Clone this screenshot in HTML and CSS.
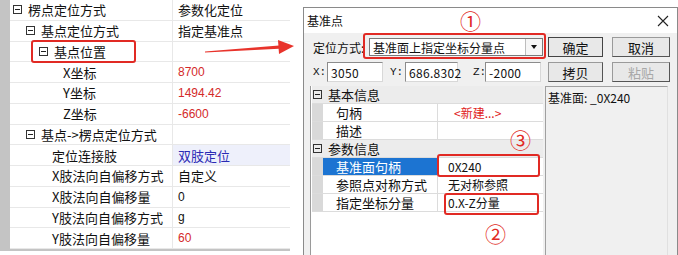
FILE: index.html
```html
<!DOCTYPE html>
<html lang="zh">
<head>
  <meta charset="UTF-8">
  <title>基准点</title>
  <link rel="stylesheet" href="styles.css">
</head>
<body>
  <div class="screen">

    <!-- property tree on the left -->
    <div class="tree">
      <div class="row"><div class="name lv1"><span class="tog"></span>楞点定位方式</div><div class="val">参数化定位</div></div>
      <div class="row"><div class="name lv2"><span class="tog"></span>基点定位方式</div><div class="val">指定基准点</div></div>
      <div class="row"><div class="name lv3"><span class="tog"></span>基点位置</div><div class="val"></div></div>
      <div class="row"><div class="name leaf3">X坐标</div><div class="val num red">8700</div></div>
      <div class="row"><div class="name leaf3">Y坐标</div><div class="val num red">1494.42</div></div>
      <div class="row"><div class="name leaf3">Z坐标</div><div class="val num red">-6600</div></div>
      <div class="row"><div class="name lv2"><span class="tog"></span>基点-&gt;楞点定位方式</div><div class="val"></div></div>
      <div class="row"><div class="name leaf2">定位连接肢</div><div class="val blue">双肢定位</div></div>
      <div class="row"><div class="name leaf2">X肢法向自偏移方式</div><div class="val">自定义</div></div>
      <div class="row"><div class="name leaf2">X肢法向自偏移量</div><div class="val num">0</div></div>
      <div class="row"><div class="name leaf2">Y肢法向自偏移方式</div><div class="val num">g</div></div>
      <div class="row"><div class="name leaf2">Y肢法向自偏移量</div><div class="val num red">60</div></div>
    </div>

    <!-- dialog -->
    <div class="dlg">
      <div class="dlg-title">
        <span>基准点</span>
        <svg class="close" width="12" height="12" viewBox="0 0 12 12">
          <path d="M1 1 L11 11 M11 1 L1 11" stroke="#222" stroke-width="1.1" fill="none"/>
        </svg>
      </div>
      <div class="dlg-body">
        <div class="line1">
          <span class="lbl">定位方式:</span>
          <div class="combo">
            <span>基准面上指定坐标分量点</span>
            <span class="drop"><i></i></span>
          </div>
          <button class="btn def">确定</button>
          <button class="btn">取消</button>
        </div>
        <div class="line2">
          <span class="xyz">X:</span><div class="edit w-x">3050</div>
          <span class="xyz l-y">Y:</span><div class="edit w-y">686.8302</div>
          <span class="xyz l-z">Z:</span><div class="edit w-z">-2000</div>
          <button class="btn">拷贝</button>
          <button class="btn off">粘贴</button>
        </div>
        <div class="main">
          <div class="pgrid">
            <div class="prow head"><span class="tog"></span>基本信息</div>
            <div class="prow"><div class="gut"></div><div class="pn">句柄</div><div class="pv red">&lt;新建...&gt;</div></div>
            <div class="prow"><div class="gut"></div><div class="pn">描述</div><div class="pv"></div></div>
            <div class="prow head"><span class="tog"></span>参数信息</div>
            <div class="prow"><div class="gut"></div><div class="pn sel">基准面句柄</div><div class="pv">0X240</div></div>
            <div class="prow"><div class="gut"></div><div class="pn">参照点对称方式</div><div class="pv">无对称参照</div></div>
            <div class="prow"><div class="gut"></div><div class="pn">指定坐标分量</div><div class="pv">0.X-Z分量</div></div>
          </div>
          <div class="info">基准面: _0X240</div>
        </div>
      </div>
    </div>

    <!-- red annotations drawn over the screenshot -->
    <div class="mark box-a"></div>
    <div class="mark box-1"></div>
    <div class="mark box-3"></div>
    <div class="mark box-2"></div>
    <span class="circ c1">①</span>
    <span class="circ c3">③</span>
    <span class="circ c2">②</span>
    <svg class="arrow" width="678" height="255" viewBox="0 0 678 255">
      <polygon points="205,51.5 279,45.5 279,48.8 205,52.6" fill="#e8332b"/>
      <polygon points="278,40 294,46 279,54" fill="#e8332b"/>
    </svg>
  </div>
</body>
</html>
```

FILE: styles.css
```css
* { box-sizing: border-box; }
body { margin: 0; background: #fff; font-family: "Noto Sans CJK SC", "Liberation Sans", sans-serif; color: #111; }

.screen { position: relative; width: 678px; height: 255px; overflow: hidden; display: flex; align-items: flex-start; }

/* left tree */
.tree { width: 290px; border-left: 10px solid #c4c4c4; border-bottom: 2px solid #c4c4c4; font-size: 13px; }
.tree .row { display: flex; height: 20.75px; border-bottom: 1px solid #e8e8e8; }
.tree .name { width: 162px; display: flex; align-items: center; white-space: nowrap; line-height: 1; }
.tree .val { flex: 1; display: flex; align-items: center; padding-left: 5px; border-left: 1px solid #e8e8e8; white-space: nowrap; line-height: 1; }
.lv1 { padding-left: 3px; }
.lv2 { padding-left: 16px; }
.lv3 { padding-left: 29px; }
.leaf2 { padding-left: 42px; }
.leaf3 { padding-left: 53px; }
.num { font-family: "Liberation Sans", sans-serif; font-size: 12px; }
.red { color: #d42a2a; }
.blue { color: #2a2ab4; background: #eef0fb; }

.tog { display: inline-block; position: relative; width: 9px; height: 9px; border: 1px solid #333; margin-right: 6px; flex: none; }
.tog::after { content: ""; position: absolute; left: 1px; right: 1px; top: 3px; height: 1px; background: #222; }

/* dialog */
.dlg { margin-left: 13px; margin-top: 7px; width: 375px; height: 260px; border: 1px solid #8a8a8a; font-size: 12px; background: #f0f0f0; }
.dlg-title { height: 25px; background: #fff; display: flex; align-items: center; justify-content: space-between; padding: 0 8px 0 3px; }
.dlg-title span { font-size: 12px; }
.close { display: block; margin-top: 1px; }

.dlg-body { padding: 4px 0 0 9px; }
.line1, .line2 { display: flex; align-items: center; height: 20px; }
.line2 { margin-top: 5px; }
.lbl { width: 56px; font-size: 12px; }
.combo { width: 174px; height: 18px; background: #fff; border: 1px solid #7a7a7a; display: flex; align-items: center; justify-content: space-between; padding-left: 3px; font-size: 12px; }
.drop { width: 17px; height: 16px; border-left: 1px solid #bdbdbd; display: flex; align-items: center; justify-content: center; background: #f6f6f6; }
.drop i { width: 0; height: 0; border-left: 3.5px solid transparent; border-right: 3.5px solid transparent; border-top: 4px solid #111; }

.btn { height: 20px; width: 55px; margin-left: 5px; padding: 0; font: 13px "Noto Sans CJK SC", sans-serif; color: #111; background: #e8e8e8; border: 1px solid #9a9a9a; border-right-color: #555; border-bottom-color: #555; }
.btn + .btn { margin-left: 9px; width: 58px; }
.btn.def { border-color: #444; }
.btn.off { color: #a8a8a8; }

.xyz { width: 14px; font-family: "Liberation Mono", monospace; font-size: 11px; }
.l-y { margin-left: 7px; width: 15px; }
.l-z { margin-left: 15px; width: 12px; }
.edit { height: 20px; background: #fff; border: 1px solid #8c8c8c; border-right-color: #d8d8d8; border-bottom-color: #d8d8d8; padding-left: 3px; display: flex; align-items: center; font-size: 12px; letter-spacing: 0.3px; }
.w-x { width: 56px; }
.w-y { width: 53px; }
.w-z { width: 56px; }
.line2 .btn { margin-left: 7px; }
.line2 .btn + .btn { margin-left: 9px; }

.main { display: flex; margin-top: 4px; margin-left: -3px; }
.pgrid { width: 233px; height: 170px; background: #fff; border-left: 1px solid #9a9a9a; padding-left: 1px; }
.prow { display: flex; height: 18px; border-bottom: 1px solid #dcdcdc; align-items: stretch; }
.prow.head { background: #ececec; align-items: center; padding-left: 1px; font-size: 13px; }
.gut { width: 11px; background: #d9d9d9; }
.pn { width: 114px; padding-left: 13px; display: flex; align-items: center; font-size: 13px; white-space: nowrap; }
.pn.sel { background: #1c74d2; color: #fff; }
.pv { flex: 1; padding-left: 10px; display: flex; align-items: center; border-left: 1px solid #dcdcdc; font-size: 12px; white-space: nowrap; }
.pv.red { color: #e02020; padding-left: 16px; }

.info { width: 123px; height: 170px; margin-left: 2px; border: 1px solid #a0a0a0; border-right-color: #e0e0e0; border-bottom: none; padding: 2px 0 0 2px; font-size: 12px; background: #f0f0f0; }

/* annotations */
.mark { position: absolute; border: 2.5px solid #e12a24; border-radius: 3px; }
.box-a { left: 31px; top: 40px; width: 105px; height: 23px; }
.box-1 { left: 363px; top: 33px; width: 183px; height: 26px; }
.box-3 { left: 437px; top: 154px; width: 103px; height: 23px; }
.box-2 { left: 444px; top: 193px; width: 95px; height: 22px; }
.circ { position: absolute; color: #e12a24; font-size: 21px; line-height: 21px; width: 21px; text-align: center; }
.c1 { left: 460px; top: 10px; }
.c3 { left: 510px; top: 129px; }
.c2 { left: 485px; top: 223px; }
.arrow { position: absolute; left: 0; top: 0; pointer-events: none; }
```
